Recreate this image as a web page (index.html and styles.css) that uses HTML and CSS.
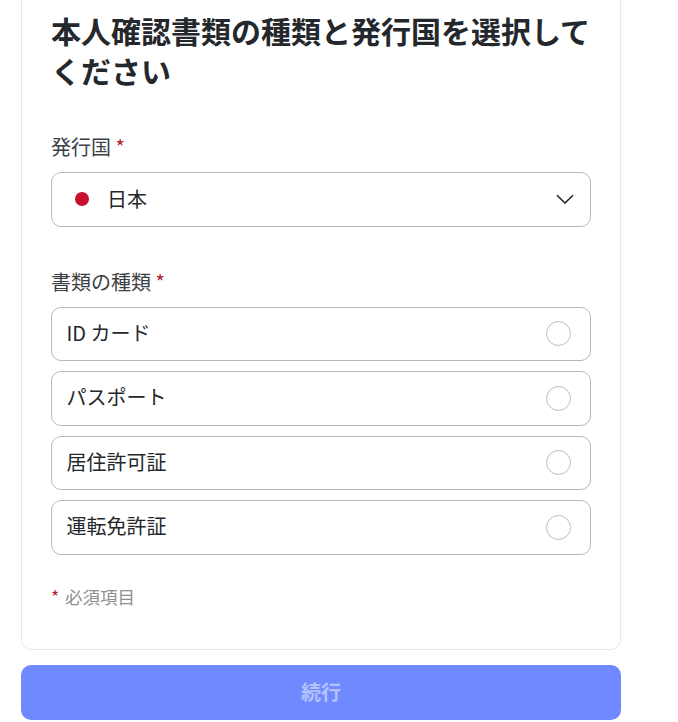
FILE: index.html
```html
<!DOCTYPE html>
<html lang="ja">
  <head>
    <meta charset="UTF-8" />
    <meta name="viewport" content="width=device-width, initial-scale=1.0" />
    <title>本人確認</title>
    <link rel="stylesheet" href="styles.css">
  </head>
  <body>
    <div class="wrapper">
      <div class="card">
        <h1 class="title">本人確認書類の種類と発行国を選択してください</h1>

        <div class="label">発行国 <span class="req">*</span></div>
        <div class="select">
          <span class="flag"><span class="sun"></span></span>
          <span class="country">日本</span>
          <svg class="chevron" width="18" height="10" viewBox="0 0 18 10">
            <path d="M1 1.2 L9 9 L17 1.2" fill="none" stroke="#24272b" stroke-width="1.6"/>
          </svg>
        </div>

        <div class="label label2">書類の種類 <span class="req">*</span></div>
        <div class="options">
          <div class="option"><span>ID カード</span><span class="radio"></span></div>
          <div class="option"><span>パスポート</span><span class="radio"></span></div>
          <div class="option"><span>居住許可証</span><span class="radio"></span></div>
          <div class="option"><span>運転免許証</span><span class="radio"></span></div>
        </div>

        <div class="note"><span class="req note-req">*</span> 必須項目</div>
      </div>
      <button class="btn">続行</button>
    </div>
  </body>
</html>
```

FILE: styles.css
```css
* {
  margin: 0px;
  padding: 0px;
  box-sizing: border-box;
}
body {
  background-color: #fff;
  font-family: "Noto Sans CJK JP", "Noto Sans", sans-serif;
  color: #24272b;
  overflow: hidden;
}
.wrapper {
  width: 600px;
  margin-left: 21px;
  margin-top: -20px;
}
.card {
  height: 670px;
  padding: 29px 29px 0;
  border: 1px solid #e8e8e8;
  border-radius: 10px;
}
.title {
  font-size: 30px;
  line-height: 40px;
  font-weight: 700;
  margin-bottom: 43px;
}
.label {
  font-size: 20px;
  line-height: 28px;
  color: #3c3f44;
  margin-bottom: 11px;
}
.label2 {
  margin-top: 41px;
  margin-bottom: 10.7px;
}
.req {
  color: #b3202f;
}
.note-req {
  margin-right: 2px;
}
.select {
  display: flex;
  align-items: center;
  height: 55px;
  padding: 0 16px 2px 20px;
  border: 1px solid #b8b8b8;
  border-radius: 10px;
}
.flag {
  display: flex;
  align-items: center;
  justify-content: center;
  width: 20px;
  height: 22px;
}
.sun {
  width: 14px;
  height: 14px;
  border-radius: 50%;
  background-color: #c8102e;
}
.country {
  font-size: 20px;
  line-height: 28px;
  margin-left: 15px;
  flex: 1;
}
.options {
  display: flex;
  flex-direction: column;
  gap: 10px;
}
.option {
  display: flex;
  align-items: center;
  justify-content: space-between;
  height: 54.5px;
  padding: 0 19px 0 14.5px;
  border: 1px solid #b8b8b8;
  border-radius: 10px;
  font-size: 20px;
  line-height: 26px;
}
.option span:first-child {
  margin-bottom: 2px;
}
.radio {
  width: 25px;
  height: 25px;
  border: 1px solid #bdbdbd;
  border-radius: 50%;
}
.note {
  margin-top: 30px;
  font-size: 17.5px;
  line-height: 24px;
  color: #8f8f8f;
}
.btn {
  display: block;
  width: 100%;
  height: 55px;
  margin-top: 15px;
  padding-bottom: 2px;
  border: none;
  border-radius: 10px;
  background-color: #6f8aff;
  color: #b4c2ff;
  font-family: inherit;
  font-size: 20px;
  font-weight: 700;
}
```
